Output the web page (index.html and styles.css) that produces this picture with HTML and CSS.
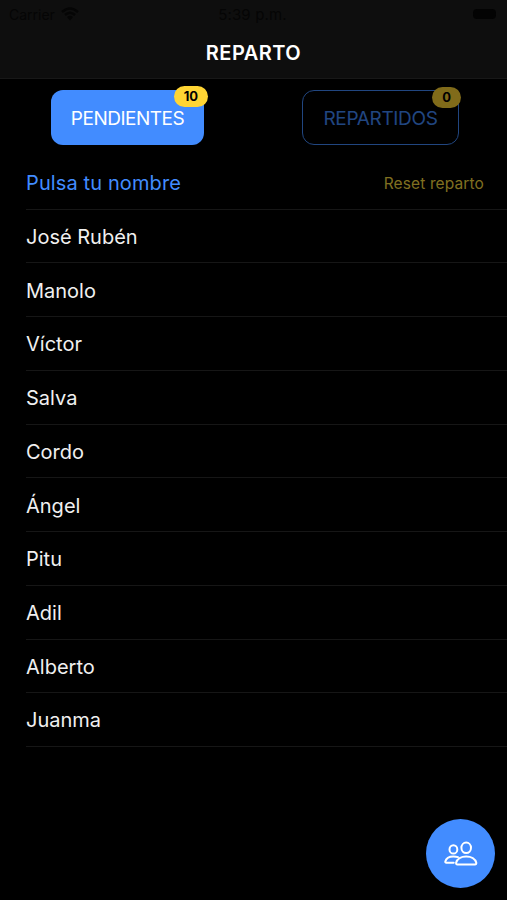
FILE: index.html
```
<!DOCTYPE html>
<html lang="es">
<head>
    <meta charset="UTF-8">
    <meta name="viewport" content="width=device-width, initial-scale=1.0">
    <title>Reparto</title>
    <link rel="stylesheet" href="styles.css">
</head>
<body>

<!-- Header -->
<header class="header">
    <div class="status-bar">
        <div class="carrier">
            <span>Carrier</span>
            <svg class="wifi" viewBox="0 0 18 14" width="18" height="14">
                <path d="M1 5 Q9 -2 17 5 M4 8 Q9 3.5 14 8" fill="none" stroke="currentColor" stroke-width="2.4"/>
                <path d="M6 10 Q9 7.5 12 10 L9 13.5 Z" fill="currentColor"/>
            </svg>
        </div>
        <span class="time">5:39 p.m.</span>
        <span class="battery"></span>
    </div>
    <h1>REPARTO</h1>
</header>

<!-- Tabs -->
<div class="tabs">
    <button class="tab tab-active">PENDIENTES<span class="badge">10</span></button>
    <button class="tab tab-outline">REPARTIDOS<span class="badge">0</span></button>
</div>

<!-- Names -->
<ul class="list">
    <li class="list-header"><span>Pulsa tu nombre</span><a class="reset">Reset reparto</a></li>
    <li><span>José Rubén</span></li>
    <li><span>Manolo</span></li>
    <li><span>Víctor</span></li>
    <li><span>Salva</span></li>
    <li><span>Cordo</span></li>
    <li><span>Ángel</span></li>
    <li><span>Pitu</span></li>
    <li><span>Adil</span></li>
    <li><span>Alberto</span></li>
    <li><span>Juanma</span></li>
</ul>

<!-- Floating button -->
<button class="fab" aria-label="Usuarios">
    <svg viewBox="0 0 34 28" width="34" height="28">
        <ellipse cx="22.2" cy="7.8" rx="4.8" ry="5.3"/>
        <ellipse cx="9.4" cy="9.4" rx="3.9" ry="4.2"/>
        <path d="M22.2 16.4 C17.3 16.4 13 18.9 12.1 22.8 C11.9 23.8 12.5 24.4 13.4 24.4 H31 C31.9 24.4 32.5 23.8 32.3 22.8 C31.4 18.9 27.1 16.4 22.2 16.4 Z"/>
        <path d="M14 17.2 C12.6 16.6 11 16.4 9.4 16.4 C5.6 16.4 2.1 18.3 1.3 21.4 C1.1 22.2 1.6 22.7 2.3 22.7 H9.7"/>
    </svg>
</button>

</body>
</html>
```

FILE: styles.css
```
* {
    margin: 0;
    padding: 0;
    box-sizing: border-box;
    font-family: Inter, "Liberation Sans", sans-serif;
}

body {
    min-height: 100vh;
    background: #000;
    color: #f0f0f0;
    overflow: hidden;
}

/* Header */
.header {
    height: 79px;
    background: #0e0e0e;
    border-bottom: 1px solid #181818;
}

.status-bar {
    display: grid;
    grid-template-columns: 1fr auto 1fr;
    align-items: center;
    height: 28px;
    padding: 0 11px 0 9px;
    color: #050505;
    font-size: 15px;
}

.time {
    letter-spacing: 0.15px;
}

.carrier {
    display: flex;
    align-items: center;
    gap: 6px;
    font-size: 14px;
}

.battery {
    justify-self: end;
    width: 23px;
    height: 10px;
    border-radius: 4px;
    background: #030303;
}

.header h1 {
    color: #fff;
    font-size: 20px;
    font-weight: 600;
    letter-spacing: 0.5px;
    line-height: 50px;
    text-align: center;
}

/* Tabs */
.tabs {
    display: flex;
    justify-content: space-between;
    padding: 11px 48px 0 51px;
}

.tab {
    position: relative;
    width: 153px;
    height: 55px;
    padding-top: 2px;
    border: none;
    border-radius: 12px;
    font-size: 19px;
    letter-spacing: -0.5px;
}

.tab-active {
    background: #428cff;
    color: #fff;
}

.tab-outline {
    width: 157px;
    background: transparent;
    border: 1.5px solid #428cff;
    color: #428cff;
    letter-spacing: -0.35px;
    opacity: 0.5;
}

.badge {
    position: absolute;
    top: -4px;
    right: -4px;
    height: 21px;
    padding: 0 10px;
    border-radius: 11px;
    background: #ffd534;
    color: #000;
    font-size: 13px;
    font-weight: 700;
    line-height: 21px;
    letter-spacing: 0;
}

.tab-outline .badge {
    right: -3px;
}

/* List */
.list {
    list-style: none;
    padding: 11px 0 0 26px;
}

.list li {
    display: flex;
    justify-content: space-between;
    align-items: center;
    height: 53.74px;
    padding-top: 1.5px;
    border-bottom: 1px solid #161616;
    font-size: 20px;
}

.list .list-header {
    padding-right: 23px;
    color: #428cff;
    letter-spacing: 0.12px;
}

.reset {
    color: #807020;
    font-size: 15.5px;
}

/* Floating button */
.fab {
    position: fixed;
    right: 12px;
    bottom: 12px;
    display: flex;
    justify-content: center;
    align-items: center;
    width: 69px;
    height: 69px;
    border: none;
    border-radius: 50%;
    background: #428cff;
}

.fab svg {
    fill: none;
    stroke: #fff;
    stroke-width: 2;
    stroke-linecap: round;
    stroke-linejoin: round;
}
```
